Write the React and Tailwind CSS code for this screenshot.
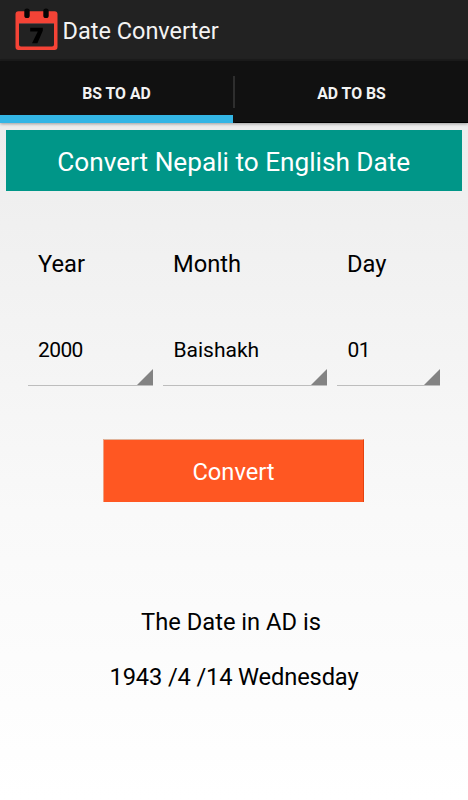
const tabs = ["BS TO AD", "AD TO BS"];

function CalendarIcon() {
  return (
    <svg className="h-[42px] w-[43px] shrink-0 overflow-visible" viewBox="0 0 43 42" fill="none">
      <path
        fillRule="evenodd"
        fill="#f44336"
        d="M3.500 2.300h36a3 3 0 0 1 3 3V38a3 3 0 0 1-3 3h-36a3 3 0 0 1-3-3V5.300a3 3 0 0 1 3-3ZM4 15v20.500a2 2 0 0 0 2 2h31a2 2 0 0 0 2-2V15Z"
      />
      <path d="M4 14.800h35" stroke="#173a40" strokeWidth="0.800" />
      <rect x="9.300" y="-0.500" width="5.400" height="9.500" rx="2.600" fill="#050505" />
      <rect x="28.300" y="-0.500" width="5.400" height="9.500" rx="2.600" fill="#050505" />
      <path fill="#000" d="M15.200 18.800h12.600v3l-5.400 12.500h-5.400l5.800-11.700h-7.600Z" />
    </svg>
  );
}

function Spinner({ label, value, className, valueClass }) {
  return (
    <div className={className}>
      <div className="h-[28px] pl-[10px] text-[23.700px] leading-[28px]">{label}</div>
      <div className="mt-[44px] flex h-[64px] items-center justify-between border-b border-[#bdbdbd] pl-[10px] text-[21px] leading-[28px]">
        <span className={valueClass}>{value}</span>
        <svg className="h-4 w-4 self-end" viewBox="0 0 16 16">
          <path d="M16 0v16H0Z" fill="#838383" />
        </svg>
      </div>
    </div>
  );
}

export default function App() {
  return (
    <div className="flex h-[800px] w-[468px] flex-col overflow-hidden bg-linear-to-b from-[#e9e9e9] via-[#f9f9f9] via-[64%] to-white font-['Roboto',sans-serif] text-black">
      <header className="flex h-[61px] shrink-0 items-center border-b-2 border-[#1c1c1c] bg-[#222222] pl-[15px] text-[#f3f3f3]">
        <CalendarIcon />
        <h1 className="ml-[4.500px] pt-[2px] text-[23.500px] leading-[28px] whitespace-nowrap">Date Converter</h1>
      </header>

      <nav className="flex h-[62px] shrink-0 bg-[#111111] text-[15.800px] font-bold text-[#f3f3f3] shadow-[0_1px_3px_rgba(0,0,0,0.350)]">
        <div className="flex w-[233px] items-center justify-center border-b-8 border-[#33b5e5] pt-[11px]">{tabs[0]}</div>
        <div className="mt-[15px] h-[32px] w-[2px] bg-[#2e2e2e]" />
        <div className="flex flex-1 items-center justify-center border-b border-black pt-[4px]">{tabs[1]}</div>
      </nav>

      <main className="flex flex-1 flex-col">
        <h2 className="mx-[6px] mt-[7px] flex h-[61px] w-[455.500px] items-center justify-center bg-[#009688] pt-[5px] text-[26.200px] whitespace-nowrap text-white">
          Convert Nepali to English Date
        </h2>

        <div className="mt-[59px] flex gap-[10px] pl-[28px]">
          <Spinner label="Year" value="2000" className="w-[125px]" valueClass="tracking-[-0.600px] pb-[8px]" />
          <Spinner label="Month" value="Baishakh" className="w-[164px]" valueClass="pl-[0.500px] pb-[8px]" />
          <Spinner label="Day" value="01" className="w-[103px]" valueClass="tracking-[-0.500px] pl-[0.500px] pb-[8px]" />
        </div>

        <button className="mt-[53px] ml-[103px] h-[63px] w-[261px] border-x border-t border-t-[#e0b49c] border-r-[#e5420f] border-l-[#f0a080] bg-[#ff5722] pt-[3px] text-[23.700px] text-white">
          Convert
        </button>

        <p className="mt-[106px] pr-[6px] text-center text-[23.700px] leading-[28px]">The Date in AD is</p>
        <p className="mt-[26.500px] text-center text-[23.700px] leading-[28px] tracking-[-0.150px]">1943 /4 /14 Wednesday</p>
      </main>
    </div>
  );
}
